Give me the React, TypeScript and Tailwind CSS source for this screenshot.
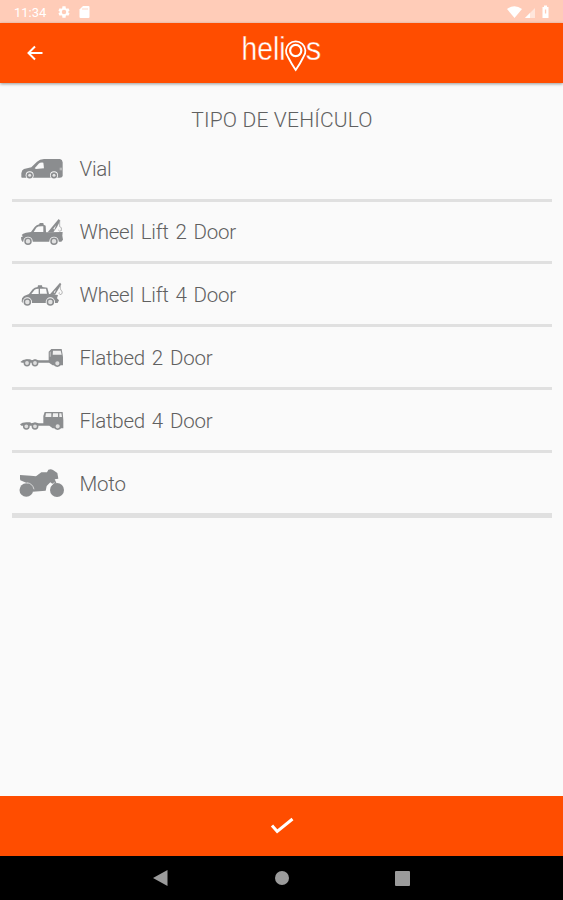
import type { ReactNode } from "react";

function Icon({ top, children }: { top: number; children: ReactNode }) {
  return (
    <svg className="ml-[6px] h-9 w-12 shrink-0 text-[#8b8d8f]" viewBox={`54 ${top} 144 108`} fill="currentColor">
      {children}
    </svg>
  );
}

function Wheel({ x, y }: { x: number; y: number }) {
  return (
    <>
      <circle cx={x} cy={y} r="14" fill="#fafafa" />
      <circle cx={x} cy={y} r="9" fill="#e2e2e2" stroke="currentColor" strokeWidth="4.500" />
    </>
  );
}

const van = (
  <Icon top={17}>
    <path d="M64 95V84Q65 74 72 71L94 66L111 49Q119 41 132 41H180Q187 42 188 51V92Q187 97 180 97H68Q64 98 64 95Z" />
    <path d="M104 69L116 55Q120 51 130 52L132 69L108 71Z" fill="#fafafa" />
    <circle cx="89" cy="90" r="12" fill="#fafafa" />
    <circle cx="89" cy="90" r="9.500" />
    <circle cx="89" cy="90" r="4.500" fill="#e5e5e5" />
    <circle cx="162" cy="90" r="12" fill="#fafafa" />
    <circle cx="162" cy="90" r="9.500" />
    <circle cx="162" cy="90" r="4.500" fill="#e5e5e5" />
    <path d="M179 67h7v8h-7z" fill="#b5b6b7" />
  </Icon>
);

const tow2 = (
  <Icon top={10}>
    <path d="M64 88L63 80L69 77L65 73Q68 68 78 66L93 64L104 49Q109 43 118 41L119 37L130 37L131 42L137 45L138 65L188 64L187 75L189 87L184 93H67Z" />
    <path d="M101 64L109 51Q113 46 130 47L130 64Z" fill="#fafafa" />
    <path d="M143 65L176 25L181 30L171 49L160 65Z" />
    <path d="M160 54L168 44L163 57Z" fill="#fafafa" />
    <path d="M179 29V48L184 51V60Q178 64 175 58" fill="none" stroke="#a5a6a7" strokeWidth="2.500" />
    <Wheel x={84} y={92} />
    <Wheel x={162} y={92} />
  </Icon>
);

const tow4 = (
  <Icon top={12}>
    <path d="M65 89L66 79L72 72L87 66L98 52Q103 46 113 45L114 40L126 40L127 45L142 47L147 66L174 69L171 79L177 85L173 93H69Z" />
    <path d="M94 66L104 53Q107 50 116 50V66ZM120 50H138L141 65H120Z" fill="#fafafa" />
    <path d="M148 69L180 32L184 37L165 68Z" />
    <path d="M161 61L168 53L164 63Z" fill="#fafafa" />
    <path d="M181 38V51L187 60Q187 68 180 68Q176 66 178 61" fill="none" stroke="#aaa" strokeWidth="2.500" />
    <Wheel x={82} y={90} />
    <Wheel x={151} y={90} />
  </Icon>
);

const flat2 = (
  <Icon top={11}>
    <path d="M61 80L69 74L80 72H90L96 75L105 72L116 75H146V49L154 41H185L189 65V90H158L147 82H66Z" />
    <path d="M159 46H182L185 58H158Z" fill="#f0f0f0" />
    <path d="M149 49h4v15h-4z" fill="#b5b6b7" />
    <circle cx="81" cy="83" r="8" fill="#dedede" stroke="currentColor" strokeWidth="4.500" />
    <circle cx="105" cy="83" r="8" fill="#dedede" stroke="currentColor" strokeWidth="4.500" />
    <circle cx="172" cy="84" r="8.500" fill="#dedede" stroke="currentColor" strokeWidth="4.500" />
  </Icon>
);

const flat4 = (
  <Icon top={11}>
    <path d="M60 78L68 73L79 72H90L95 75L105 72L116 75H130V53L134 41H188L190 65V90H158L148 82H64Z" />
    <path d="M138 45H154V56H136ZM159 45H174V56H158ZM178 45H184L186 56H178Z" fill="#f0f0f0" />
    <circle cx="79" cy="84" r="8" fill="#dedede" stroke="currentColor" strokeWidth="4.500" />
    <circle cx="105" cy="84" r="8" fill="#dedede" stroke="currentColor" strokeWidth="4.500" />
    <circle cx="173" cy="84" r="8.500" fill="#dedede" stroke="currentColor" strokeWidth="4.500" />
  </Icon>
);

const moto = (
  <Icon top={14}>
    <path d="M60 44L92 46L108 48L124 36L141 36L145 28Q153 25 159 29L172 38L175 55L164 57L169 67L163 75L151 66L140 77L137 91L98 94L94 82L82 69L61 60L60 55Z" />
    <circle cx="79" cy="89" r="20.500" />
    <circle cx="171" cy="89" r="21" />
    <path d="M80 67Q98 69 102 87M151 78Q157 69 164 67" fill="none" stroke="#fafafa" strokeWidth="2" />
  </Icon>
);

const vehicles = [
  { name: "Vial", icon: van },
  { name: "Wheel Lift 2 Door", icon: tow2 },
  { name: "Wheel Lift 4 Door", icon: tow4 },
  { name: "Flatbed 2 Door", icon: flat2 },
  { name: "Flatbed 4 Door", icon: flat4 },
  { name: "Moto", icon: moto },
];

function StatusBar() {
  return (
    <div className="flex h-[23px] shrink-0 items-center bg-[#ffccb8] pl-[14px] pr-[13px] text-white">
      <span className="w-[43px] pt-px text-[13px] leading-none">11:34</span>
      <svg className="h-[14px] w-[14px]" viewBox="0 0 24 24" fill="currentColor">
        <path fillRule="evenodd" d="M19.4 13a8 8 0 0 0 0-2l2.2-1.7-2.2-3.7-2.6 1a8 8 0 0 0-1.7-1L14.7 2H9.3l-.4 3.6a8 8 0 0 0-1.7 1l-2.6-1-2.2 3.7L4.6 11a8 8 0 0 0 0 2l-2.2 1.7 2.2 3.7 2.6-1a8 8 0 0 0 1.7 1l.4 3.6h5.4l.4-3.6a8 8 0 0 0 1.7-1l2.6 1 2.2-3.7zM12 15.8a3.8 3.8 0 1 1 0-7.6 3.8 3.8 0 0 1 0 7.6z" />
      </svg>
      <svg className="ml-[8px] h-3 w-[11px]" viewBox="0 0 11 12" fill="currentColor">
        <path d="M4 0H9.500Q10.500 0 10.500 1V11Q10.500 12 9.500 12H1.500Q.5 12 .5 11V3.500Z" />
        <path d="M4 2v2M6 2v2M8 2v2" stroke="#ffccb8" strokeWidth=".8" />
      </svg>
      <svg className="ml-auto h-[14px] w-[43px]" viewBox="0 0 43 14" fill="currentColor">
        <path d="M0 4Q7.500-1.500 15 4L7.500 13Z" />
        <path d="M18 13L28 3V13Z" opacity=".5" />
        <path d="M18 13L23 8V13Z" />
        <path d="M35.500 2H37V.5H40V2H41.500V13H35.500Z" />
        <path d="M37.900 4.500h1.300v4h-1.300z" fill="#ffccb8" />
      </svg>
    </div>
  );
}

function Header() {
  return (
    <header className="z-10 flex h-[60px] shrink-0 items-center bg-[#ff4d00] pl-[26px] shadow-[0_1px_3px_rgba(0,0,0,0.4)]">
      <svg className="h-4 w-[17px] text-white" viewBox="0 0 17 16" fill="none" stroke="currentColor" strokeWidth="2">
        <path d="M16.500 8H2M9 1.500L2.500 8L9 14.500" />
      </svg>
      <svg className="ml-[192px] h-[58px] w-[94px] font-['Liberation_Sans',sans-serif] text-white" viewBox="235 24 94 58" fill="currentColor">
        <text x="241.500" y="59.500" fontSize="33" textLength="44" lengthAdjust="spacingAndGlyphs" stroke="#ff4d00" strokeWidth=".4">heli</text>
        <text x="305.800" y="59.500" fontSize="33" textLength="15.500" lengthAdjust="spacingAndGlyphs" stroke="#ff4d00" strokeWidth=".4">s</text>
        <path d="M295.700 70Q291 63 288 57A9.700 9.700 0 1 1 303.400 57Q300.500 63 295.700 70Z" fill="#ff4d00" stroke="currentColor" strokeWidth="1.800" />
        <circle cx="295.700" cy="50.500" r="5.600" fill="none" stroke="currentColor" strokeWidth="2.200" />
      </svg>
    </header>
  );
}

export default function App() {
  return (
    <div className="flex h-[900px] w-[563px] flex-col overflow-hidden bg-[#fafafa] font-['Roboto',sans-serif]">
      <StatusBar />
      <Header />
      <main className="flex-1 pl-3 pr-[11px]">
        <h1 className="mt-[23px] h-[32.700px] text-center text-[21px] leading-[28px] font-light tracking-[0.180px] text-[#606060]">
          TIPO DE VEHÍCULO
        </h1>
        <ul>
          {vehicles.map((v) => (
            <li key={v.name} className="flex h-[62.900px] items-center border-b-[3px] border-[#e0e0e0] last:h-[65px] last:border-b-[5px]">
              {v.icon}
              <span className="ml-[13.500px] pt-[1.500px] text-[20.500px] leading-none font-light tracking-[-0.240px] text-[#606060] [word-spacing:2.200px]">
                {v.name}
              </span>
            </li>
          ))}
        </ul>
      </main>
      <div className="flex h-[60px] shrink-0 items-center justify-center bg-[#ff4d00]">
        <svg className="h-[18px] w-6 text-white" viewBox="0 0 24 18" fill="none" stroke="currentColor" strokeWidth="3">
          <path d="M2 8.500L7.200 14.500L22.500 2" />
        </svg>
      </div>
      <nav className="flex h-[44px] shrink-0 items-center justify-between bg-black px-[153px] text-[#9b9b9b]">
        <svg className="h-4 w-[15px]" viewBox="0 0 15 16" fill="currentColor"><path d="M0 8L14.500 0V16Z" /></svg>
        <span className="h-[14px] w-[14px] rounded-full bg-[#9b9b9b]" />
        <span className="h-[15px] w-[15px] rounded-[1px] bg-[#9b9b9b]" />
      </nav>
    </div>
  );
}
